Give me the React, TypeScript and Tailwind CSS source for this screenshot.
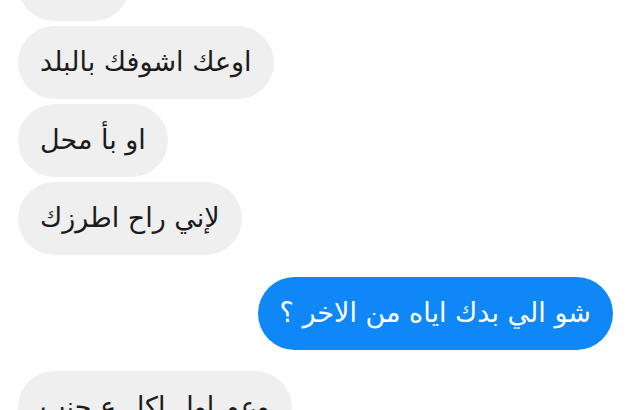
const incoming = ["ماشي", "اوعك اشوفك بالبلد", "او بأ محل", "لإني راح اطرزك"];

function Bubble({ text, mine }: { text: string; mine?: boolean }) {
  return (
    <div
      dir="rtl"
      className={
        mine
          ? "h-[73px] flex items-center rounded-full px-[22px] bg-[#0f87f7] text-white whitespace-nowrap"
          : "h-[73px] flex items-center rounded-full px-[22px] bg-[#efefef] text-[#1b1b1b] whitespace-nowrap"
      }
    >
      {text}
    </div>
  );
}

export default function App() {
  return (
    <div
      className="w-[642px] h-[410px] overflow-hidden bg-white text-[27px]"
      style={{ fontFamily: '"DejaVu Sans", sans-serif' }}
    >
      <div className="flex flex-col items-start gap-[5px] pl-[18px] -mt-[52px]">
        {incoming.map((t, i) => (
          <Bubble key={i} text={t} />
        ))}
      </div>
      <div className="flex justify-end pr-[29px] mt-[22px]">
        <Bubble text="شو الي بدك اياه من الاخر ؟" mine />
      </div>
      <div className="flex pl-[18px] mt-[21px]">
        <Bubble text="وعم اول اكل ع جنب" />
      </div>
    </div>
  );
}
